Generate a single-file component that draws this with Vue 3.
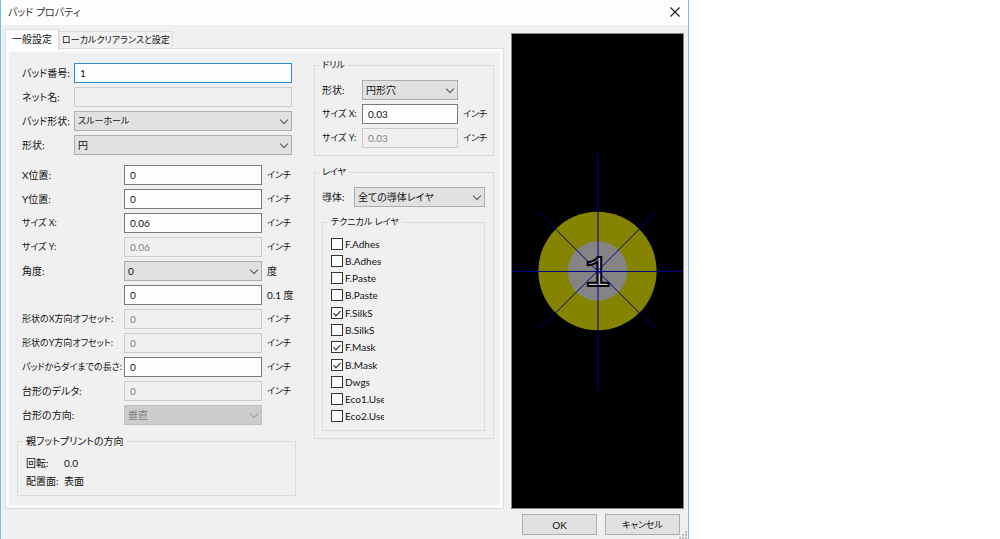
<script setup>
import { ref, reactive } from 'vue'

const activeTab = ref('general')
const tabs = [
  { id: 'general', label: '一般設定' },
  { id: 'clearance', label: 'ローカルクリアランスと設定', compact: true }
]

const pad = reactive({
  number: '1',
  net: '',
  type: 'スルーホール',
  shape: '円'
})

const rows = reactive([
  { id: 'pos-x', label: 'X位置:', value: '0', unit: 'インチ' },
  { id: 'pos-y', label: 'Y位置:', value: '0', unit: 'インチ' },
  { id: 'size-x', label: 'サイズ X:', value: '0.06', unit: 'インチ', compact: true },
  { id: 'size-y', label: 'サイズ Y:', value: '0.06', unit: 'インチ', compact: true, disabled: true },
  { id: 'angle', label: '角度:', value: '0', unit: '度', options: ['0', '90', '-90', '180'] },
  { id: 'angle-custom', label: '', aria: '角度', value: '0', unit: '0.1 度' },
  { id: 'offset-x', label: '形状のX方向オフセット:', value: '0', unit: 'インチ', compact: true, disabled: true },
  { id: 'offset-y', label: '形状のY方向オフセット:', value: '0', unit: 'インチ', compact: true, disabled: true },
  { id: 'die', label: 'パッドからダイまでの長さ:', value: '0', unit: 'インチ', compact: true },
  { id: 'delta', label: '台形のデルタ:', value: '0', unit: 'インチ', disabled: true },
  { id: 'direction', label: '台形の方向:', value: '垂直', unit: '', options: ['垂直', '水平'], disabled: true }
])

const drill = reactive({ shape: '円形穴', x: '0.03', y: '0.03' })
const copper = ref('全ての導体レイヤ')

const layers = reactive([
  { name: 'F.Adhes', on: false },
  { name: 'B.Adhes', on: false },
  { name: 'F.Paste', on: false },
  { name: 'B.Paste', on: false },
  { name: 'F.SilkS', on: true },
  { name: 'B.SilkS', on: false },
  { name: 'F.Mask', on: true },
  { name: 'B.Mask', on: true },
  { name: 'Dwgs', on: false },
  { name: 'Eco1.User', on: false },
  { name: 'Eco2.User', on: false }
])
</script>

<template>
  <div class="dialog">
    <header class="titlebar">
      <span class="title">パッド プロパティ</span>
      <button class="close" type="button" aria-label="閉じる">
        <svg viewBox="0 0 10 10" width="10" height="10">
          <path d="M0.5 0.5L9.5 9.5M9.5 0.5L0.5 9.5" fill="none" stroke="#222" stroke-width="1.2" />
        </svg>
      </button>
    </header>

    <div class="body">
      <div class="notebook">
        <div class="tabs" role="tablist">
          <button
            v-for="tab in tabs"
            :key="tab.id"
            type="button"
            role="tab"
            class="tab"
            :class="{ active: activeTab === tab.id, compact: tab.compact }"
            :aria-selected="activeTab === tab.id"
            @click="activeTab = tab.id"
          >{{ tab.label }}</button>
        </div>

        <div class="page">
          <div class="page-inner">
            <!-- 左側 -->
            <div class="left">
              <div class="grid-main">
                <label for="pad-number">パッド番号:</label>
                <input id="pad-number" v-model="pad.number" class="field focused" type="text">
                <label for="pad-net">ネット名:</label>
                <input id="pad-net" v-model="pad.net" class="field" type="text" disabled>
                <label for="pad-type">パッド形状:</label>
                <div class="select compact">
                  <select id="pad-type" v-model="pad.type">
                    <option>スルーホール</option>
                    <option>SMD</option>
                  </select>
                </div>
                <label for="pad-shape">形状:</label>
                <div class="select">
                  <select id="pad-shape" v-model="pad.shape">
                    <option>円</option>
                    <option>楕円</option>
                  </select>
                </div>
              </div>

              <div class="grid-values">
                <template v-for="row in rows" :key="row.id">
                  <label :for="row.id" :class="{ compact: row.compact }">{{ row.label }}</label>
                  <div v-if="row.options" class="select">
                    <select :id="row.id" v-model="row.value" :disabled="row.disabled">
                      <option v-for="o in row.options" :key="o">{{ o }}</option>
                    </select>
                  </div>
                  <input
                    v-else
                    :id="row.id"
                    v-model="row.value"
                    class="field"
                    type="text"
                    :aria-label="row.aria"
                    :disabled="row.disabled"
                  >
                  <span class="unit" :class="{ compact: row.unit === 'インチ' }">{{ row.unit }}</span>
                </template>
              </div>

              <fieldset class="group parent">
                <legend>親フットプリントの方向</legend>
                <dl>
                  <dt>回転:</dt>
                  <dd>0.0</dd>
                  <dt>配置面:</dt>
                  <dd>表面</dd>
                </dl>
              </fieldset>
            </div>

            <!-- 右側 -->
            <div class="right">
              <fieldset class="group">
                <legend class="compact">ドリル</legend>
                <div class="grid-drill">
                  <label for="drill-shape">形状:</label>
                  <div class="select">
                    <select id="drill-shape" v-model="drill.shape">
                      <option>円形穴</option>
                      <option>長円穴</option>
                    </select>
                  </div>
                  <span></span>
                  <label for="drill-x" class="compact">サイズ X:</label>
                  <input id="drill-x" v-model="drill.x" class="field" type="text">
                  <span class="unit compact">インチ</span>
                  <label for="drill-y" class="compact">サイズ Y:</label>
                  <input id="drill-y" v-model="drill.y" class="field" type="text" disabled>
                  <span class="unit compact">インチ</span>
                </div>
              </fieldset>

              <fieldset class="group">
                <legend class="compact">レイヤ</legend>
                <div class="grid-copper">
                  <label for="copper">導体:</label>
                  <div class="select">
                    <select id="copper" v-model="copper">
                      <option>全ての導体レイヤ</option>
                      <option>F.Cu</option>
                      <option>B.Cu</option>
                    </select>
                  </div>
                </div>
                <fieldset class="group tech">
                  <legend class="compact">テクニカル レイヤ</legend>
                  <div class="layers">
                    <label v-for="layer in layers" :key="layer.name" class="layer">
                      <input v-model="layer.on" type="checkbox">
                      <span>{{ layer.name }}</span>
                    </label>
                  </div>
                </fieldset>
              </fieldset>
            </div>
          </div>
        </div>
      </div>

      <!-- パッドのプレビュー -->
      <div class="preview">
        <svg viewBox="-86 -237 172 474">
          <circle r="59.5" fill="#848400" />
          <circle r="30" fill="#848484" />
          <text x="0" y="15" text-anchor="middle" class="pad-name">{{ pad.number }}</text>
          <g stroke="#000084" stroke-width="1" fill="none">
            <path d="M0.5 -119V120M-86 0.5H86" />
            <path d="M-59.5 -59.5L59.5 59.5M59.5 -59.5L-59.5 59.5" />
          </g>
        </svg>
      </div>
    </div>

    <footer class="footer">
      <button class="btn" type="button">OK</button>
      <button class="btn compact" type="button">キャンセル</button>
      <svg class="grip" viewBox="0 0 8 8" width="8" height="8">
        <path d="M6 0h2v2h-2zM3 3h2v2h-2zM6 3h2v2h-2zM0 6h2v2h-2zM3 6h2v2h-2zM6 6h2v2h-2z" fill="#bfbfbf" />
      </svg>
    </footer>
  </div>
</template>

<style>
body {
  margin: 0;
  background: #fff;
}
</style>

<style scoped>
.dialog {
  box-sizing: border-box;
  width: 68.9%;
  min-height: 100vh;
  display: flex;
  flex-direction: column;
  background: #f0f0f0;
  border: solid #6fc0f0;
  border-width: 0 1px;
  color: #111;
  font-family: Lato, "Noto Sans CJK JP", sans-serif;
  font-size: 10px;
  line-height: 14px;
  font-feature-settings: "palt";
  white-space: nowrap;
}

button,
input,
select {
  box-sizing: border-box;
  margin: 0;
  font: inherit;
  font-feature-settings: inherit;
  color: inherit;
}

/* カナの多い文字列用 */
.compact {
  font-size: 9px;
}

.titlebar {
  display: flex;
  align-items: center;
  justify-content: space-between;
  height: 25px;
  padding: 0 8px 2px 7px;
  box-sizing: border-box;
  background: #fdfdfd;
}

.title {
  color: #333;
}

.close {
  display: flex;
  padding: 0;
  border: 0;
  background: none;
}

.body {
  flex: 1;
  display: grid;
  grid-template-columns: minmax(0, 1fr) 173px;
  gap: 7px;
  padding: 4px 4px 0;
}

.notebook {
  display: flex;
  flex-direction: column;
}

.tabs {
  display: flex;
  align-items: flex-end;
  height: 19px;
}

.tab {
  height: 17px;
  padding: 0 2px;
  border: 1px solid #dcdcdc;
  border-bottom: 0;
  background: #f0f0f0;
}

.tab.active {
  position: relative;
  height: 21px;
  margin-bottom: -2px;
  padding: 0 6px 2px;
  background: #fdfdfd;
}

.page {
  flex: 1;
  display: flex;
  padding: 3px;
  border: 1px solid #dcdcdc;
  background: #fdfdfd;
}

.page-inner {
  flex: 1;
  display: grid;
  grid-template-columns: minmax(0, 279fr) minmax(0, 180fr);
  column-gap: 18px;
  padding: 6px 6px 8px 8px;
  background: #f0f0f0;
}

.left {
  padding-top: 5px;
}

.grid-main,
.grid-values,
.grid-drill,
.grid-copper {
  display: grid;
  grid-auto-rows: 20px;
  row-gap: 4px;
  align-items: center;
}

.grid-main {
  grid-template-columns: 52px 1fr;
  margin: 0 4px 10px 5px;
}

.grid-values {
  grid-template-columns: 102px 1fr 30px;
  margin: 0 4px 0 5px;
}

.grid-drill {
  grid-template-columns: 40px 1fr 27px;
}

.grid-copper {
  grid-template-columns: 32px 1fr;
  margin-bottom: 8px;
}

.unit {
  padding-left: 5px;
}

.field {
  width: 100%;
  height: 20px;
  padding: 0 5px;
  border: 1px solid #7a7a7a;
  border-radius: 0;
  background: #fdfdfd;
  outline: 0;
}

.field.focused {
  border-color: #2b8ad8;
}

.field:disabled {
  border-color: #ccc;
  background: #f0f0f0;
  color: #838383;
}

.select {
  position: relative;
}

.select select {
  display: block;
  width: 100%;
  height: 20px;
  padding: 0 16px 0 3px;
  appearance: none;
  border: 1px solid #adadad;
  border-radius: 0;
  background: #e1e1e1;
}

.select::after {
  content: '';
  position: absolute;
  top: 6px;
  right: 5px;
  width: 5px;
  height: 5px;
  border: solid #555;
  border-width: 0 1px 1px 0;
  transform: rotate(45deg);
  pointer-events: none;
}

.select select:disabled {
  border-color: #bfbfbf;
  background: #ccc;
  color: #838383;
  opacity: 1;
}

.select:has(select:disabled)::after {
  border-color: #a0a0a0;
}

.group {
  min-width: 0;
  margin: 0;
  padding: 8px 8px 7px 7px;
  border: 1px solid #dcdcdc;
}

.group legend {
  margin-left: -3px;
  padding: 0 3px;
}

.group + .group {
  margin-top: 9px;
}

.parent {
  margin-top: 9px;
  padding: 6px 8px 5px;
}

dl {
  display: grid;
  grid-template-columns: 38px 1fr;
  margin: 0;
  line-height: 18px;
}

dd {
  margin: 0;
}

.tech {
  padding: 6px 8px 5px;
}

.layers {
  display: grid;
  grid-auto-rows: 1fr;
  min-height: 190px;
}

.layer {
  display: flex;
  align-items: center;
  gap: 2px;
  width: 53px;
}

.layer span {
  overflow: hidden;
}

.layer input {
  flex: none;
  position: relative;
  width: 12px;
  height: 12px;
  appearance: none;
  border: 1px solid #333;
  background: #fdfdfd;
}

.layer input:checked::before {
  content: '';
  position: absolute;
  top: 1px;
  left: 3px;
  width: 3px;
  height: 6px;
  border: solid #222;
  border-width: 0 1px 1px 0;
  transform: rotate(45deg);
}

.preview {
  margin-top: 4px;
  box-sizing: border-box;
  border: 1px solid #83877f;
  background: #000;
}

.preview svg {
  display: block;
  width: 100%;
  height: 100%;
}

.pad-name {
  font-family: "Liberation Mono", monospace;
  font-size: 44px;
  fill: #c8c8c8;
  stroke: #000;
  stroke-width: 2px;
}

.footer {
  position: relative;
  display: flex;
  justify-content: flex-end;
  gap: 8px;
  padding: 5px 8px 4px;
}

.btn {
  width: 75px;
  height: 21px;
  padding: 0;
  border: 1px solid #adadad;
  background: #e1e1e1;
}

.grip {
  position: absolute;
  right: 1px;
  bottom: 0;
}
</style>
